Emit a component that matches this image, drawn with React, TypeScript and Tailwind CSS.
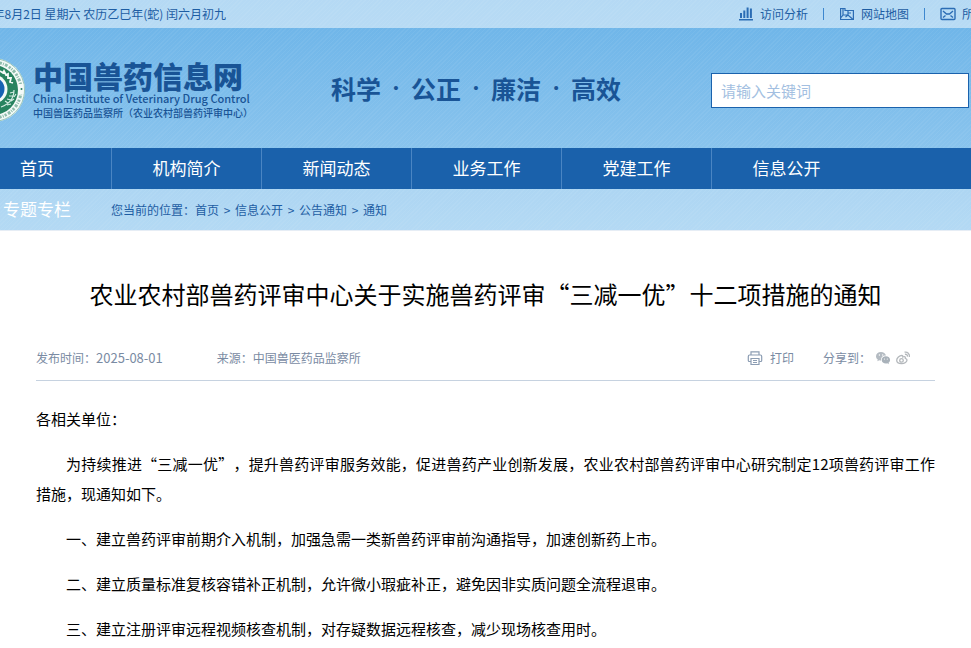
import { Fragment } from "react";

function StatsIcon() {
  return (
    <svg className="h-4 w-4 shrink-0" viewBox="0 0 16 16" fill="#2b6cb4">
      <path d="M2 7h2v5H2zM5.300 4.500h2V12h-2zM8.600 1.500h2V12h-2zM11.900 2.500h2V12h-2zM1 13h14v1.500H1z" />
    </svg>
  );
}

function MapIcon() {
  return (
    <svg
      className="h-4 w-4 shrink-0"
      viewBox="0 0 16 16"
      fill="none"
      stroke="#2b6cb4"
      strokeWidth="1.2"
    >
      <path d="M1.600 2.500H6v2h8.400v9H1.600zM4 2.500V9l-2.400 3M4 9h5l4.500 4M9 4.500V9l-2.500 2M9 7h3" />
    </svg>
  );
}

function MailIcon() {
  return (
    <svg
      className="h-4 w-4 shrink-0"
      viewBox="0 0 16 16"
      fill="none"
      stroke="#2b6cb4"
      strokeWidth="1.4"
    >
      <rect x="1" y="2.500" width="14" height="11" rx="1" />
      <path d="M3 5l3.500 3h3L13 5M3 11.500 5.500 9.500M13 11.500 10.500 9.500" />
    </svg>
  );
}

function PrintIcon() {
  return (
    <svg
      className="h-4 w-4 shrink-0"
      viewBox="0 0 16 16"
      fill="none"
      stroke="#8c9db3"
      strokeWidth="1.2"
    >
      <path d="M4 5V1.800h8V5M4 11.500H2.200a.9.9 0 0 1-.9-.9V6.400c0-.8.500-1.400 1.300-1.400h10.800c.8 0 1.300.6 1.300 1.400v4.200c0 .5-.4.900-.9.900H12" />
      <path d="M4 8.500h8v6H4zM6 10.500h4M6 12.500h4" />
    </svg>
  );
}

function WechatIcon() {
  return (
    <svg className="h-4 w-4" viewBox="0 0 16 16">
      <path
        d="M6 2C3 2 1 3.900 1 6.300c0 1.400.7 2.500 1.800 3.300l-.5 1.700 2-1c.6.2 1.100.2 1.800.2C5.700 7.500 8 5.500 11 5.600 10.500 3.500 8.500 2 6 2z"
        fill="#b4bbc2"
      />
      <path
        d="M10.900 6.300c-2.400 0-4.200 1.600-4.200 3.600s1.800 3.600 4.200 3.600c.5 0 1-.1 1.400-.2l1.600.9-.4-1.500c1-.6 1.600-1.600 1.600-2.800 0-2-1.800-3.600-4.200-3.600z"
        fill="#a9b2ba"
      />
      <g fill="#fff">
        <circle cx="4.400" cy="5" r=".7" />
        <circle cx="7.700" cy="5" r=".7" />
        <circle cx="9.500" cy="9" r=".6" />
        <circle cx="12.300" cy="9" r=".6" />
      </g>
    </svg>
  );
}

function WeiboIcon() {
  return (
    <svg
      className="h-4 w-4"
      viewBox="0 0 16 16"
      fill="none"
      stroke="#b4b8bc"
      strokeWidth="1.3"
    >
      <path d="M6.800 5.500C4.500 5.500 1.700 8 1.700 10.300c0 2 2.300 3.300 4.900 3.300 3.200 0 5.400-1.800 5.400-3.500 0-1.200-1-1.600-1.700-1.800.3-1.300-.3-2-2.500-1.300.1-1-.1-1.500-1-1.500z" />
      <circle cx="6.500" cy="10.400" r="1.800" />
      <path d="M9.500 2.200c3-.6 5.500 1.600 4.900 4.800M9.900 4.300c1.700-.3 2.800.8 2.500 2.400" />
    </svg>
  );
}

// right part of the round emblem, the rest runs off the page edge
function Emblem() {
  return (
    <svg className="h-16 w-[26px] shrink-0" viewBox="0 0 26 64" fill="none">
      <circle cx="-7" cy="32" r="32" fill="#f4faf8" />
      <circle cx="-7" cy="32" r="31.500" stroke="#5fa48d" strokeWidth=".6" />
      <circle
        cx="-7"
        cy="32"
        r="28"
        stroke="#8dbcab"
        strokeWidth="3"
        strokeDasharray="2.200 1.100 1 1.200 2.800 1.600"
      />
      <path d="M18.500 26h5v10h-5z" fill="#f4faf8" />
      <circle cx="21.500" cy="31" r="1" fill="#27805f" />
      <circle cx="-7" cy="32" r="25" fill="#27835f" />
      <path
        d="M0 13l3 2 1-2 2 4 2-1 0 4 3 0-1 4 3 1"
        stroke="#f4faf8"
        strokeWidth="1.800"
      />
      <path
        d="M14 32c0 8-5 14-13 17M14 34l-4 1M13 38l-4 0M11 42l-4-1M8 45l-3-2M14 39l2-3M11 43l3-2M7 47l4-1"
        stroke="#d6ece3"
        strokeWidth="1.200"
      />
      <circle cx="-7" cy="31" r="14.500" fill="#f4faf8" />
      <circle cx="-7" cy="31" r="11.500" fill="#1763b3" />
    </svg>
  );
}

function TopBar() {
  return (
    <div className="flex h-7 items-center justify-between bg-white/50 text-xs text-[#1d5da3]">
      <div className="flex w-[226px] justify-end overflow-hidden whitespace-nowrap">
        <span>年8月2日 星期六 农历乙巳年(蛇) 闰六月初九</span>
      </div>
      <div className="flex w-[233px] items-center overflow-hidden whitespace-nowrap">
        {quickLinks.map(({ label, Icon }, index) => (
          <Fragment key={label}>
            {index > 0 && (
              <span className="mx-[15px] h-3 w-px shrink-0 bg-[#3d87cf]" />
            )}
            <a href="#" className="flex shrink-0 items-center gap-[6px]">
              <Icon />
              {label}
            </a>
          </Fragment>
        ))}
      </div>
    </div>
  );
}

function Banner() {
  return (
    <div className="flex h-[120px] items-center pr-[2px] pt-1 text-[#195496]">
      <div className="flex w-[245px] shrink-0 items-center gap-[7px]">
        <Emblem />
        <div className="flex flex-col whitespace-nowrap">
          <span className="text-[30px] font-black leading-8">
            中国兽药信息网
          </span>
          <span className="text-[11px] font-medium leading-[14px]">
            China Institute of Veterinary Drug Control
          </span>
          <span className="text-[10px] font-medium leading-4 [text-spacing-trim:normal]">
            中国兽医药品监察所（农业农村部兽药评审中心）
          </span>
        </div>
      </div>
      <div className="ml-[86px] flex shrink-0 pb-1 text-[25px] font-bold leading-8">
        {slogan.map((word, index) => (
          <Fragment key={word}>
            {index > 0 && (
              <span className="w-[30px] text-center font-['Liberation_Serif',serif]">
                ·
              </span>
            )}
            <span>{word}</span>
          </Fragment>
        ))}
      </div>
      <input
        type="text"
        aria-label="搜索"
        placeholder="请输入关键词"
        className="ml-auto h-[35px] w-[258px] border border-[#1a62ad] bg-white px-[9px] text-[15px] outline-none placeholder:text-[#a3bfe1]"
      />
    </div>
  );
}

function NavBar() {
  return (
    <nav className="flex h-[41px] overflow-hidden bg-[#1a61ab] text-[17px] leading-[39px] text-white">
      <a href="#" className="w-[111px] shrink-0 pl-5">
        首页
      </a>
      {navItems.map((item) => (
        <a
          key={item}
          href="#"
          className="w-[150px] shrink-0 border-l border-[#4a85c3] text-center"
        >
          {item}
        </a>
      ))}
    </nav>
  );
}

function Breadcrumb() {
  return (
    <div className="flex h-[42px] items-center border-b border-[#e6edf5] bg-white/25 text-xs text-[#1d5da3]">
      <a href="#" className="w-[111px] shrink-0 pl-[3px] text-[17px] text-white">
        专题专栏
      </a>
      <span>您当前的位置：</span>
      {crumbs.map((crumb, index) => (
        <Fragment key={crumb}>
          {index > 0 && <span className="w-4 text-center">&gt;</span>}
          <a href="#">{crumb}</a>
        </Fragment>
      ))}
    </div>
  );
}

function Article() {
  return (
    <main className="px-9 pt-[45px]">
      <h1 className="text-center text-2xl leading-9 text-black">
        农业农村部兽药评审中心关于实施兽药评审“三减一优”十二项措施的通知
      </h1>
      <div className="mt-[23px] flex h-[46px] items-center justify-between border-b border-[#c6d2e0] text-xs text-[#7a8ba3]">
        <div className="flex items-baseline gap-[54px]">
          <span>
            发布时间：<span className="text-[13px]">2025-08-01</span>
          </span>
          <span>来源：中国兽医药品监察所</span>
        </div>
        <div className="flex items-center pr-6">
          <button className="flex items-center gap-[7px]">
            <PrintIcon />
            打印
          </button>
          <span className="ml-[29px]">分享到：</span>
          <button aria-label="微信" className="ml-1">
            <WechatIcon />
          </button>
          <button aria-label="微博" className="ml-1">
            <WeiboIcon />
          </button>
        </div>
      </div>
      <article className="space-y-[15px] pt-[23px] text-justify text-[15px] leading-[30px] text-black">
        <p>各相关单位：</p>
        <p className="indent-[30px]">
          为持续推进“三减一优”，提升兽药评审服务效能，促进兽药产业创新发展，农业农村部兽药评审中心研究制定12项兽药评审工作措施，现通知如下。
        </p>
        {measures.map((text) => (
          <p key={text} className="indent-[30px]">
            {text}
          </p>
        ))}
      </article>
    </main>
  );
}

export default function App() {
  return (
    <div
      lang="zh-CN"
      className="overflow-hidden bg-white font-['Noto_Sans_CJK_SC',sans-serif] [text-spacing-trim:space-all]"
    >
      <header className="bg-[repeating-linear-gradient(135deg,#ffffff0d_0px,#ffffff0d_1px,transparent_1px,transparent_3px),linear-gradient(#6ab3e8,#9bcdf0)]">
        <TopBar />
        <Banner />
        <NavBar />
        <Breadcrumb />
      </header>
      <Article />
    </div>
  );
}

const quickLinks = [
  { label: "访问分析", Icon: StatsIcon },
  { label: "网站地图", Icon: MapIcon },
  { label: "所长信箱", Icon: MailIcon },
];

const slogan = ["科学", "公正", "廉洁", "高效"];

const navItems = ["机构简介", "新闻动态", "业务工作", "党建工作", "信息公开"];

const crumbs = ["首页", "信息公开", "公告通知", "通知"];

const measures = [
  "一、建立兽药评审前期介入机制，加强急需一类新兽药评审前沟通指导，加速创新药上市。",
  "二、建立质量标准复核容错补正机制，允许微小瑕疵补正，避免因非实质问题全流程退审。",
  "三、建立注册评审远程视频核查机制，对存疑数据远程核查，减少现场核查用时。",
];
